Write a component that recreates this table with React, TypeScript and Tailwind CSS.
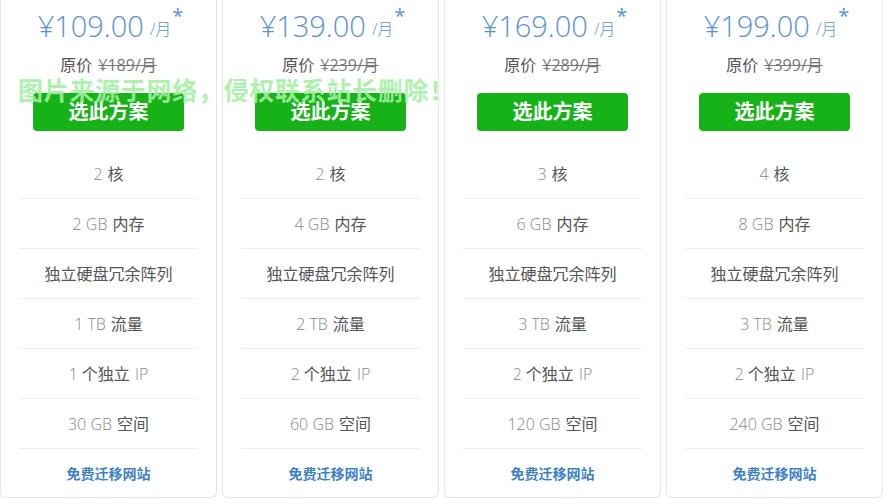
import { FunctionComponent } from "react";

interface Plan {
    price: string
    original: string
    cores: string
    ram: string
    traffic: string
    ip: string
    disk: string
}

const plans: Plan[] = [
    { price: "109.00", original: "189", cores: "2", ram: "2", traffic: "1", ip: "1", disk: "30" },
    { price: "139.00", original: "239", cores: "2", ram: "4", traffic: "2", ip: "2", disk: "60" },
    { price: "169.00", original: "289", cores: "3", ram: "6", traffic: "3", ip: "2", disk: "120" },
    { price: "199.00", original: "399", cores: "4", ram: "8", traffic: "3", ip: "2", disk: "240" },
]

const font = { fontFamily: '"Open Sans", "Noto Sans CJK SC", sans-serif' }

const Row: FunctionComponent<{ num?: string, label: string }> = ({ num, label }) => (
    <div className="mx-[18px] h-[50px] flex items-center justify-center border-b border-[#efefef] text-[16px]">
        {num && <span className="text-[#888] font-light mr-[5px]">{num}</span>}
        <span className="text-[#555]">{label}</span>
    </div>
)

const PlanCard: FunctionComponent<{ plan: Plan }> = ({ plan }) => {
    return (
        <div className="w-[217px] shrink-0 h-[498px] bg-white border border-t-0 border-[#e6e6e6] rounded-b-[6px] flex flex-col items-center">
            <div className="h-[50px] flex items-center justify-center text-[#5a93d2] pl-[4px]">
                <span className="text-[29px] font-light leading-none">¥{plan.price}</span>
                <span className="text-[16px] font-light ml-[6px] mt-[8px]">/月</span>
                <span className="text-[20px] self-start mt-[6px] ml-[1px] leading-none">*</span>
            </div>
            <div className="h-[30px] flex items-center text-[16px]">
                <span className="text-[#555] mr-[6px]">原价</span>
                <span className="text-[#777] line-through">¥{plan.original}/月</span>
            </div>
            <button className="mt-[13px] w-[151px] h-[38px] rounded-[4px] bg-[#17b217] text-white text-[20px] font-bold">
                选此方案
            </button>
            <div className="w-full mt-[18px] flex flex-col">
                <Row num={plan.cores} label="核" />
                <Row num={`${plan.ram} GB`} label="内存" />
                <Row label="独立硬盘冗余阵列" />
                <Row num={`${plan.traffic} TB`} label="流量" />
                <div className="mx-[18px] h-[50px] flex items-center justify-center border-b border-[#efefef] text-[16px]">
                    <span className="text-[#888] font-light mr-[4px]">{plan.ip}</span>
                    <span className="text-[#555]">个独立</span>
                    <span className="text-[#888] font-light ml-[5px]">IP</span>
                </div>
                <Row num={`${plan.disk} GB`} label="空间" />
                <div className="h-[48px] flex items-center justify-center text-[14px] font-bold text-[#3d7fc6]">
                    免费迁移网站
                </div>
            </div>
        </div>
    )
}

const App: FunctionComponent = () => {
    return (
        <div className="relative w-[884px] h-[500px] bg-white overflow-hidden" style={font}>
            <div className="flex gap-[5px]">
                {plans.map((p, i) => <PlanCard key={i} plan={p} />)}
            </div>
            <div className="absolute left-[18px] top-[72px] text-[25px] font-bold tracking-[0.7px] text-[#a3f0a3]/90 pointer-events-none">
                图片来源于网络，侵权联系站长删除！
            </div>
        </div>
    )
}

export default App
